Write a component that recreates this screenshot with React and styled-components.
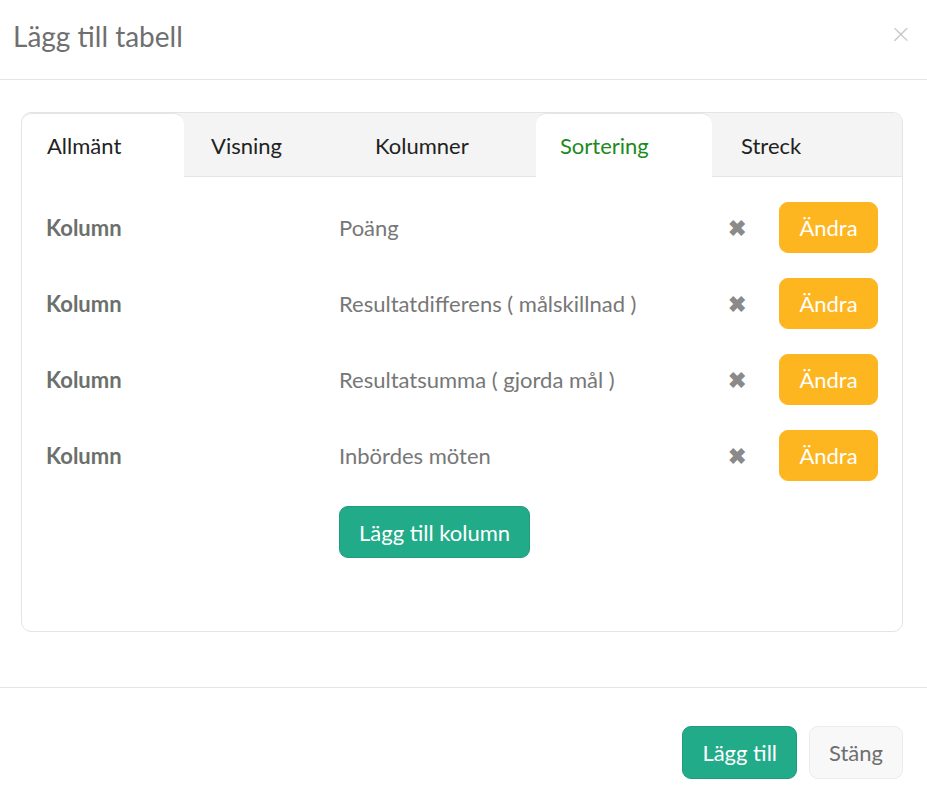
import React from "react";
import styled, { createGlobalStyle } from "styled-components";

const GlobalStyle = createGlobalStyle`
  body {
    margin: 0;
    background: #fff;
    font-family: Lato, "Open Sans", sans-serif;
  }
`;

const Modal = styled.div`
  width: 927px;
  height: 803px;
  display: flex;
  flex-direction: column;
  background: #fff;
`;

const Header = styled.div`
  height: 79px;
  display: flex;
  align-items: center;
  justify-content: space-between;
  padding: 0 17px 0 13px;
  border-bottom: 1px solid #e5e5e5;
`;

const Title = styled.h4`
  margin: 0 0 7px;
  font-size: 28px;
  font-weight: 400;
  color: #6f6f6f;
`;

const CloseX = styled.span`
  font-size: 32px;
  font-weight: 300;
  color: #c6c6c6;
  margin-bottom: 14px;
  line-height: 1;
`;

const Body = styled.div`
  padding: 32px 24px 55px 21px;
`;

const Panel = styled.div`
  border: 1px solid #e4e4e4;
  border-radius: 10px;
  overflow: hidden;
`;

const TabBar = styled.div`
  display: flex;
  height: 64px;
  background: #f4f4f4;
`;

const Tab = styled.div`
  width: ${(p) => (p.$w ? `${p.$w}px` : "auto")};
  flex: ${(p) => (p.$w ? "none" : "1")};
  padding-left: ${(p) => p.$pl}px;
  display: flex;
  align-items: center;
  font-size: 22px;
  color: ${(p) => (p.$color ? p.$color : "#222")};
  background: ${(p) => (p.$active ? "#fff" : "transparent")};
  border-radius: 10px 10px 0 0;
  border-bottom: 1px solid ${(p) => (p.$active ? "#fff" : "#e6e6e6")};
  border-top: 1px solid ${(p) => (p.$active ? "#e6e6e6" : "transparent")};
  box-sizing: border-box;
`;

const Content = styled.div`
  padding: 25px 24px 73px 24px;
  display: flex;
  flex-direction: column;
  gap: 25px;
`;

const Row = styled.div`
  display: grid;
  grid-template-columns: 293px 1fr 14px 99px;
  align-items: center;
  height: 51px;
`;

const Label = styled.div`
  font-size: 22px;
  font-weight: 700;
  color: #6c706c;
`;

const Value = styled.div`
  font-size: 22px;
  color: #777;
`;

const Remove = styled.span`
  color: #8a8a8a;
  font-size: 22px;
  font-weight: 700;
  line-height: 1;
  margin-right: 33px;
  justify-self: end;
  grid-column: 3;
`;

const Button = styled.button`
  font-family: Lato, "Open Sans", sans-serif;
  font-size: 22px;
  height: ${(p) => p.$h || 51}px;
  padding: 0 ${(p) => p.$px || 19}px;
  border-radius: 9px;
  cursor: pointer;
  color: ${(p) => (p.$variant === "plain" ? "#6f6f6f" : "#fff")};
  background: ${(p) =>
    p.$variant === "warn" ? "#fdb61f" : p.$variant === "plain" ? "#f8f8f8" : "#22ab88"};
  border: 1px solid
    ${(p) =>
      p.$variant === "warn" ? "#fdb61f" : p.$variant === "plain" ? "#ececec" : "#1f9c7b"};
`;

const EditButton = styled(Button)`
  width: 99px;
  padding: 0;
  grid-column: 4;
`;

const AddRow = styled.div`
  padding-left: 293px;
  display: flex;
`;

const Footer = styled.div`
  border-top: 1px solid #e5e5e5;
  padding: 38px 24px 0;
  display: flex;
  justify-content: flex-end;
  gap: 12px;
`;

const tabs = [
  { name: "Allmänt", w: 162, pl: 25, active: true },
  { name: "Visning", w: 164, pl: 27 },
  { name: "Kolumner", w: 188, pl: 27 },
  { name: "Sortering", w: 176, pl: 24, active: true, color: "#1d8a1d" },
  { name: "Streck", pl: 29 },
];

const rows = [
  "Poäng",
  "Resultatdifferens ( målskillnad )",
  "Resultatsumma ( gjorda mål )",
  "Inbördes möten",
];

export default function App() {
  return (
    <Modal>
      <GlobalStyle />
      <Header>
        <Title>Lägg till tabell</Title>
        <CloseX>×</CloseX>
      </Header>
      <Body>
        <Panel>
          <TabBar>
            {tabs.map((t) => (
              <Tab key={t.name} $w={t.w} $pl={t.pl} $active={t.active} $color={t.color}>
                {t.name}
              </Tab>
            ))}
          </TabBar>
          <Content>
            {rows.map((r) => (
              <Row key={r}>
                <Label>Kolumn</Label>
                <Value>{r}</Value>
                <Remove>✖</Remove>
                <EditButton $variant="warn">Ändra</EditButton>
              </Row>
            ))}
            <AddRow>
              <Button $h={52}>Lägg till kolumn</Button>
            </AddRow>
          </Content>
        </Panel>
      </Body>
      <Footer>
        <Button $h={53} $px={19}>Lägg till</Button>
        <Button $h={53} $px={19} $variant="plain">Stäng</Button>
      </Footer>
    </Modal>
  );
}
